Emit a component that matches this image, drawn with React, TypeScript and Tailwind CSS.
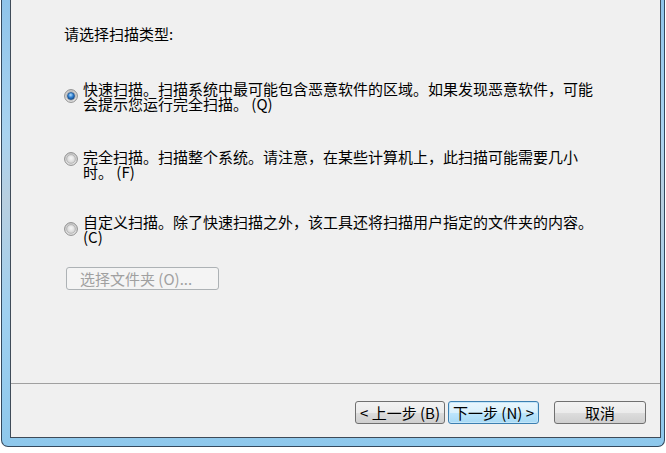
import React from "react";

const Radio = ({ checked }: { checked?: boolean }) => (
  <svg width="14" height="14" viewBox="0 0 14 14" className="shrink-0">
    <defs>
      <linearGradient id="rg-ring" x1="0" y1="0" x2="0" y2="1">
        <stop offset="0" stopColor="#c8c8c8" />
        <stop offset="1" stopColor="#e6e6e6" />
      </linearGradient>
      <radialGradient id="rg-in" cx="0.5" cy="0.4" r="0.6">
        <stop offset="0" stopColor="#f6f6f6" />
        <stop offset="1" stopColor="#d2d2d2" />
      </radialGradient>
      <radialGradient id="rg-dot" cx="0.45" cy="0.35" r="0.65">
        <stop offset="0" stopColor="#b6e1ff" />
        <stop offset="0.55" stopColor="#2f80d2" />
        <stop offset="1" stopColor="#164f92" />
      </radialGradient>
    </defs>
    <circle cx="7" cy="7" r="6.4" fill="url(#rg-ring)" stroke="#8f8f8f" strokeWidth="1" />
    <circle cx="7" cy="7" r="4.3" fill="url(#rg-in)" stroke="#a8a8a8" strokeWidth="0.7" />
    {checked && <circle cx="7" cy="7" r="3.5" fill="url(#rg-dot)" stroke="#1a4c86" strokeWidth="0.7" />}
  </svg>
);

const options = [
  {
    text: "快速扫描。扫描系统中最可能包含恶意软件的区域。如果发现恶意软件，可能会提示您运行完全扫描。 (Q)",
    checked: true,
    radioTop: "mt-[8px]",
    top: "mt-[40px]",
  },
  {
    text: "完全扫描。扫描整个系统。请注意，在某些计算机上，此扫描可能需要几小时。 (F)",
    checked: false,
    radioTop: "mt-[3px]",
    top: "mt-[38px]",
  },
  {
    text: "自定义扫描。除了快速扫描之外，该工具还将扫描用户指定的文件夹的内容。 (C)",
    checked: false,
    radioTop: "mt-[8px]",
    top: "mt-[35px]",
  },
];

const btn =
  "h-[23px] flex items-center justify-center rounded-[3px] border text-[15px] leading-[15px] text-black";

export default function App() {
  return (
    <div className="w-[666px] h-[453px] bg-white pl-[1px] overflow-hidden font-['Noto_Sans_CJK_SC',sans-serif]">
      {/* window frame */}
      <div className="w-[664px] h-[447px] flex border-l border-r border-b border-[#34495e] rounded-b-[7px] bg-[linear-gradient(to_bottom,#8fc4ea,#a9d3f0_30%,#b8cfe0_45%,#9fd0f0_70%,#8ec8ec)] pl-[8px] pr-[3px] pb-[8px]">
        {/* client area */}
        <div className="flex-1 flex flex-col bg-[#f0f0f0] border-l border-r border-b border-[#3f4b58]">
          <div className="mt-[26px] pl-[53px] text-[15px] leading-[15px] text-black">请选择扫描类型:</div>

          {options.map((o, i) => (
            <div key={i} className={`${o.top} pl-[53px] flex items-start gap-[5px]`}>
              <div className={o.radioTop}>
                <Radio checked={o.checked} />
              </div>
              <div className="w-[515px] text-[15px] leading-[15px] text-black">{o.text}</div>
            </div>
          ))}

          <div className="mt-[23px] ml-[55px] w-[153px] h-[23px] flex items-center pl-[13px] rounded-[3px] border border-[#adb2b5] bg-[#f4f4f4] text-[15px] leading-[15px] text-[#a0a0a0]">
            选择文件夹 (O)...
          </div>

          <div className="mt-[93px] h-px bg-[#a0a0a0]" />

          <div className="mt-[17px] flex justify-end pr-[14px]">
            <div className={`${btn} w-[90px] border-[#707070] bg-[linear-gradient(to_bottom,#f2f2f2_0%,#ebebeb_50%,#dddddd_50%,#cfcfcf_100%)]`}>
              &lt; 上一步 (B)
            </div>
            <div className={`${btn} ml-[3px] w-[91px] border-[#3c7fb1] bg-[linear-gradient(to_bottom,#eaf6fd_0%,#d9f0fc_50%,#bee6fd_50%,#a7d9f5_100%)] shadow-[inset_0_0_0_1px_#c4e6f9]`}>
              下一步 (N) &gt;
            </div>
            <div className={`${btn} ml-[15px] w-[92px] border-[#707070] bg-[linear-gradient(to_bottom,#f2f2f2_0%,#ebebeb_50%,#dddddd_50%,#cfcfcf_100%)]`}>
              取消
            </div>
          </div>
        </div>
      </div>
    </div>
  );
}
